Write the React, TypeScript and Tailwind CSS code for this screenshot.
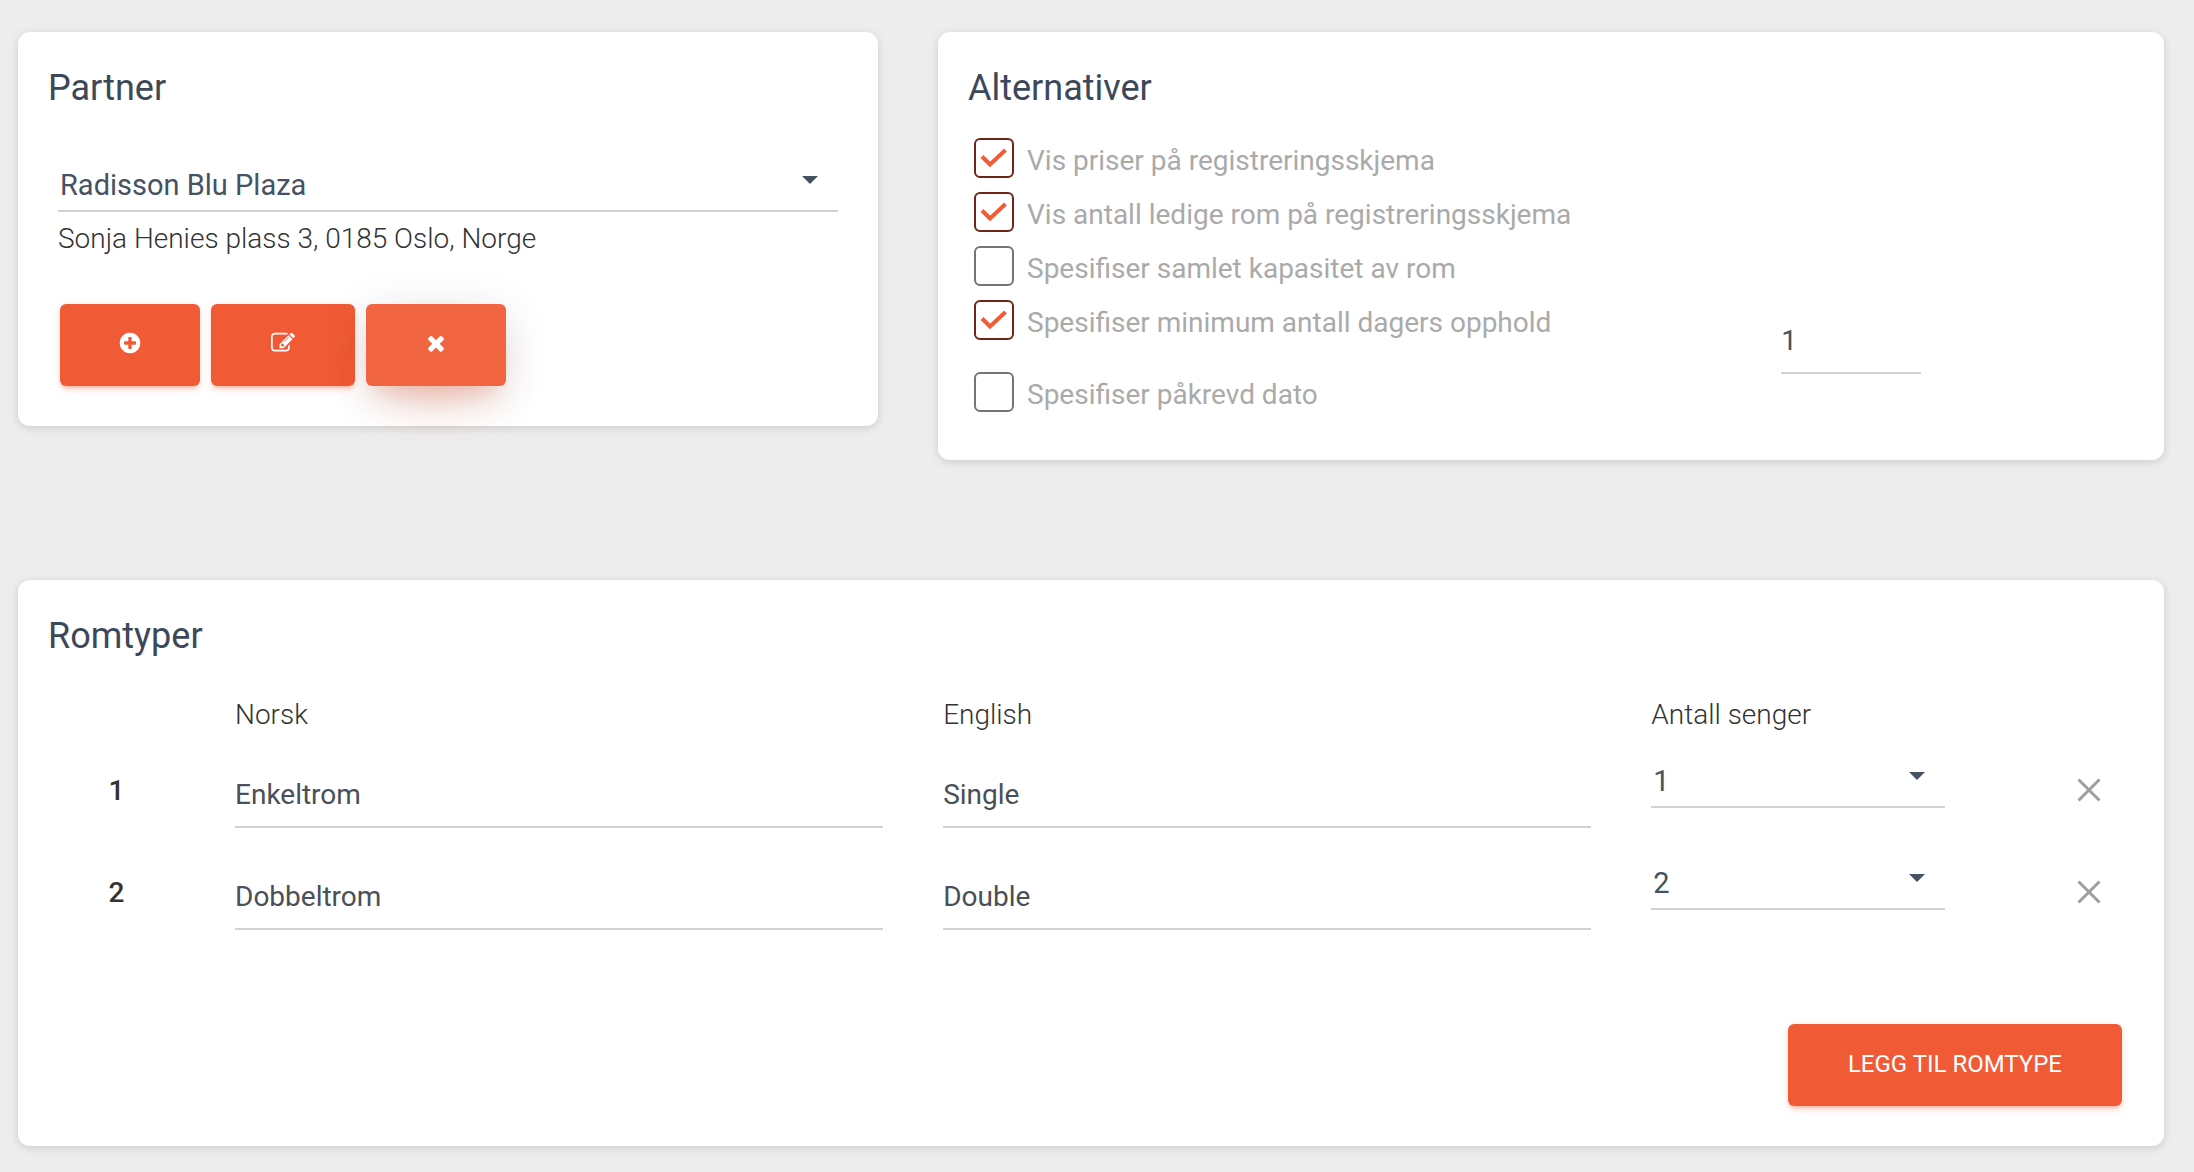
import { useState } from "react";
import type { ReactNode } from "react";

const PLUS_CIRCLE =
  "M1344 960v-128q0-26-19-45t-45-19h-256v-256q0-26-19-45t-45-19h-128q-26 0-45 19t-19 45v256h-256q-26 0-45 19t-19 45v128q0 26 19 45t45 19h256v256q0 26 19 45t45 19h128q26 0 45-19t19-45v-256h256q26 0 45-19t19-45zm320-64q0 209-103 385.5t-279.5 279.5-385.5 103-385.5-103-279.5-279.5-103-385.5 103-385.5 279.5-279.5 385.5-103 385.5 103 279.5 279.5 103 385.5z";
const PENCIL_SQUARE =
  "M888 1184l116-116-152-152-116 116v56h96v96h56zm440-720q-16-16-33 1l-350 350q-17 17-1 33t33-1l350-350q17-17 1-33zm80 594v190q0 119-84.5 203.5t-203.5 84.5h-832q-119 0-203.5-84.5t-84.5-203.5v-832q0-119 84.5-203.5t203.5-84.5h832q63 0 117 25 15 7 18 23 3 17-9 29l-49 49q-14 14-32 8-23-6-45-6h-832q-66 0-113 47t-47 113v832q0 66 47 113t113 47h832q66 0 113-47t47-113v-126q0-13 9-22l64-64q15-15 35-7t20 29zm-96-738l288 288-672 672h-288v-288zm444 132l-92 92-288-288 92-92q28-28 68-28t68 28l152 152q28 28 28 68t-28 68z";
const TIMES =
  "M1490 1322q0 40-28 68l-136 136q-28 28-68 28t-68-28l-294-294-294 294q-28 28-68 28t-68-28l-136-136q-28-28-28-68t28-68l294-294-294-294q-28-28-28-68t28-68l136-136q28-28 68-28t68 28l294 294 294-294q28-28 68-28t68 28l136 136q28 28 28 68t-28 68l-294 294 294 294q28 28 28 68z";

function Glyph({ d }: { d: string }) {
  return (
    <svg viewBox="0 0 1792 1792" className="size-6 fill-current" aria-hidden="true">
      <path d={d} />
    </svg>
  );
}

function Card({ title, className, children }: { title: string; className?: string; children: ReactNode }) {
  return (
    <section className={`rounded-xl bg-white pt-9 shadow-[0_2px_8px_rgba(0,0,0,0.14)] ${className ?? ""}`}>
      <h2 className="px-[30px] text-[36px] leading-10 text-[#3c4858]">{title}</h2>
      {children}
    </section>
  );
}

function Select({ label, value, options }: { label: string; value: string; options: string[] }) {
  const [current, setCurrent] = useState(value);
  return (
    <div className="relative">
      <select
        aria-label={label}
        value={current}
        onChange={(e) => setCurrent(e.target.value)}
        className="block h-11 w-full appearance-none border-b-2 border-[#d2d2d2] bg-transparent pb-2 pl-[2px] text-[29px] leading-8 text-[#465261] outline-none"
      >
        {options.map((o) => (
          <option key={o}>{o}</option>
        ))}
      </select>
      <svg viewBox="0 0 16 8" className="pointer-events-none absolute top-2 right-5 h-2 w-4 fill-[#465261]" aria-hidden="true">
        <path d="M0 0h16L8 8z" />
      </svg>
    </div>
  );
}

function TextField({ label, value }: { label: string; value: string }) {
  return (
    <input
      type="text"
      aria-label={label}
      defaultValue={value}
      className="block h-[50px] w-full border-b-2 border-[#d2d2d2] bg-transparent pb-4 text-[28px] leading-8 text-[#495057] outline-none"
    />
  );
}

function Option({ label, checked }: { label: string; checked?: boolean }) {
  return (
    <label className="flex items-start gap-[13px]">
      <span className="relative block size-10 shrink-0">
        <input
          type="checkbox"
          defaultChecked={checked}
          className="peer block size-10 appearance-none rounded-md border-2 border-[#757575] checked:border-[#6f2513]"
        />
        <svg
          viewBox="0 0 40 40"
          className="pointer-events-none absolute inset-0 hidden size-10 fill-none stroke-[#f15b35] stroke-4 peer-checked:block"
          aria-hidden="true"
        >
          <path d="M8 18.5l8 8L31.5 12" />
        </svg>
      </span>
      <span className="pt-[7px] text-[28px] leading-8 text-[#aaaaaa]">{label}</span>
    </label>
  );
}

const BUTTON = "flex h-[82px] items-center justify-center rounded-md text-2xl text-white";
const REST =
  "bg-[#f05b35] shadow-[0_4px_4px_rgba(240,91,53,0.14),0_6px_2px_-4px_rgba(240,91,53,0.2),0_2px_10px_rgba(240,91,53,0.12)]";
const RAISED =
  "bg-[#f16641] shadow-[0_28px_52px_-24px_rgba(240,91,53,0.42),0_8px_46px_rgba(0,0,0,0.12),0_16px_20px_-10px_rgba(240,91,53,0.2)]";

const rooms = [
  { no: "Enkeltrom", en: "Single", beds: "1" },
  { no: "Dobbeltrom", en: "Double", beds: "2" },
];

export default function App() {
  return (
    <main className="min-h-screen bg-[#ededed] pt-8 pr-[30px] pb-[26px] pl-[18px] font-[Roboto,sans-serif] text-[#333333]">
      <div className="grid grid-cols-[430fr_613fr] items-start gap-x-[60px]">
        <Card title="Partner">
          <div className="px-10 pt-[60px] pb-10">
            <Select label="Partner" value="Radisson Blu Plaza" options={["Radisson Blu Plaza"]} />
            <p className="pt-[11px] text-[28px] leading-8 font-light">Sonja Henies plass 3, 0185 Oslo, Norge</p>
            <div className="flex gap-[11px] pt-[49px] pl-[2px]">
              <button type="button" aria-label="Legg til partner" className={`${BUTTON} ${REST} w-[140px] pb-1`}>
                <Glyph d={PLUS_CIRCLE} />
              </button>
              <button type="button" aria-label="Rediger partner" className={`${BUTTON} ${REST} w-[144px] pb-1`}>
                <Glyph d={PENCIL_SQUARE} />
              </button>
              <button type="button" aria-label="Fjern partner" className={`${BUTTON} ${RAISED} w-[140px] pb-1`}>
                <Glyph d={TIMES} />
              </button>
            </div>
          </div>
        </Card>

        <Card title="Alternativer">
          <div className="pt-[30px] pb-12 pl-9">
            <div className="flex flex-col gap-[14px]">
              <Option label="Vis priser på registreringsskjema" checked />
              <Option label="Vis antall ledige rom på registreringsskjema" checked />
              <Option label="Spesifiser samlet kapasitet av rom" />
              <div className="flex h-[72px] items-start">
                <div className="w-2/3">
                  <Option label="Spesifiser minimum antall dagers opphold" checked />
                </div>
                <div className="w-[154px] pt-6 pl-[14px]">
                  <TextField label="Minimum antall dager" value="1" />
                </div>
              </div>
            </div>
            <Option label="Spesifiser påkrevd dato" />
          </div>
        </Card>
      </div>

      <Card title="Romtyper" className="mt-[120px]">
        <table className="mt-[43px] w-full table-fixed text-left text-[28px] leading-8">
          <colgroup>
            <col className="w-[187px]" />
            <col className="w-[33%]" />
            <col className="w-[33%]" />
            <col className="w-[16.5%]" />
            <col />
          </colgroup>
          <thead>
            <tr>
              <td />
              <th scope="col" className="px-[30px] pb-[15px] font-light">Norsk</th>
              <th scope="col" className="px-[30px] pb-[15px] font-light">English</th>
              <th scope="col" className="px-[30px] pb-[15px] font-light">Antall senger</th>
              <td />
            </tr>
          </thead>
          <tbody>
            {rooms.map((room, i) => (
              <tr key={room.no} className="h-[102px] align-top">
                <th scope="row" className="pt-[29px] pl-[10px] text-center font-medium">{i + 1}</th>
                <td className="px-[30px] pt-8">
                  <TextField label={`Norsk navn ${i + 1}`} value={room.no} />
                </td>
                <td className="px-[30px] pt-8">
                  <TextField label={`Engelsk navn ${i + 1}`} value={room.en} />
                </td>
                <td className="px-[30px] pt-[18px]">
                  <Select label={`Antall senger ${i + 1}`} value={room.beds} options={["1", "2", "3", "4"]} />
                </td>
                <td className="pt-8 pl-[38px]">
                  <button type="button" aria-label={`Fjern romtype ${i + 1}`} className="mx-auto block">
                    <svg viewBox="0 0 24 24" className="size-6 fill-none stroke-[#9e9e9e] stroke-3" aria-hidden="true">
                      <path d="M1.5 1.5l21 21M22.5 1.5l-21 21" />
                    </svg>
                  </button>
                </td>
              </tr>
            ))}
          </tbody>
        </table>
        <div className="flex justify-end px-[42px] pt-[74px] pb-10">
          <button type="button" className={`${BUTTON} ${REST} px-[60px] pb-[2px] uppercase`}>
            Legg til romtype
          </button>
        </div>
      </Card>
    </main>
  );
}
